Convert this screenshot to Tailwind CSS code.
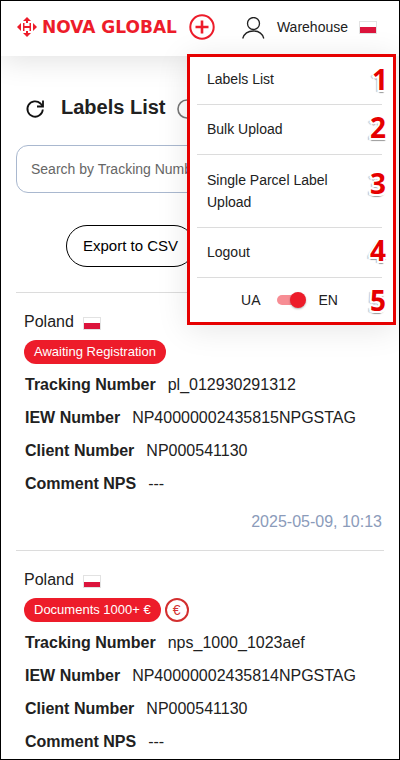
<!DOCTYPE html>
<html lang="en">
<head>
  <meta charset="utf-8">
  <meta name="viewport" content="width=device-width, initial-scale=1">
  <title>Nova Global - Labels List</title>
  <script src="https://cdn.jsdelivr.net/npm/@tailwindcss/browser@4"></script>
</head>
<body class="bg-white font-['Liberation_Sans',Arial,sans-serif] text-base text-[#212121]">
  <div class="relative min-h-screen border border-black overflow-hidden">

    <header class="flex items-center h-[55px] pb-[3px] pl-[15px] pr-[22px] shadow-[0_4px_30px_rgba(0,0,0,0.12)]">
      <a href="#" class="flex items-center gap-1 text-[#ed1c2a]" aria-label="Nova Global">
        <svg class="w-[22px] h-[22px]" viewBox="0 0 22 22" fill="currentColor">
          <path d="M11 1l4 4h-3v2h-2V5H7z"/>
          <path d="M11 21l-4-4h3v-2h2v2h3z"/>
          <path d="M7 7h1.500v3h5V7H15v8h-1.500v-3h-5v3H7z"/>
          <path d="M1 11l4-4v8z"/>
          <path d="M21 11l-4-4v8z"/>
        </svg>
        <span class="font-['DejaVu_Sans',sans-serif] text-[17px] leading-6 font-bold whitespace-nowrap">NOVA GLOBAL</span>
      </a>
      <button type="button" class="ml-3 shrink-0 text-[#ed1c2a]" aria-label="Create label">
        <svg class="w-[26px] h-[26px]" viewBox="0 0 26 26" fill="none" stroke="currentColor" stroke-width="2">
          <circle cx="13" cy="13" r="11.7"/>
          <path stroke-width="2.6" d="M13 6.500v13M6.500 13h13"/>
        </svg>
      </button>
      <button type="button" class="ml-auto flex items-center gap-2.5 text-sm">
        <svg class="w-6 h-6 mt-1 mr-px" viewBox="0 0 24 24" fill="none" stroke="#212121" stroke-width="1.300">
          <circle cx="11.500" cy="6.500" r="6"/>
          <path d="M.7 21.500c1.500-5 6-7.500 10.700-7.500S20.500 16.500 21.800 21.500"/>
        </svg>
        <span>Warehouse</span>
        <span class="ml-px w-[18px] h-[13px] border border-[#e2e2e2] bg-linear-to-b from-white from-50% to-[#dc143c] to-50%"></span>
      </button>
    </header>

    <main class="px-[15px]">
      <div class="flex items-center pt-[39px] pl-[9px]">
        <button type="button" class="mt-1" aria-label="Refresh">
          <svg class="w-5 h-5" viewBox="0 0 20 20" fill="none" stroke="#111" stroke-width="1.800">
            <path d="M17.800 10.500A7.700 7.700 0 1 1 15.500 4.500L17.500 6.800"/>
            <path d="M18 1.500v6h-6"/>
          </svg>
        </button>
        <h1 class="ml-4 text-xl leading-6 font-bold">Labels List</h1>
        <svg class="ml-3 mt-1 w-5 h-5" viewBox="0 0 20 20" fill="none" stroke="#777" stroke-width="1.600">
          <circle cx="10" cy="10" r="9"/>
          <path d="M12 9v5M12 5.500v1.500"/>
        </svg>
      </div>

      <input type="search" aria-label="Search" placeholder="Search by Tracking Number"
        class="block mt-[26px] w-full h-12 px-3.5 text-sm border border-[#a9b8cf] rounded-xl placeholder:text-[#666]">

      <button type="button" class="block ml-[50px] mt-8 h-[42px] px-4 text-[15px] text-black border border-black rounded-full">Export to CSV</button>

      <section class="mt-[25px] border-t border-[#dcdcdc] pl-2 pr-0.5 pt-[17px] pb-4">
        <div class="flex items-center gap-2 leading-6">
          <span>Poland</span>
          <span class="ml-px w-[18px] h-[13px] mt-0.5 border border-[#e2e2e2] bg-linear-to-b from-white from-50% to-[#dc143c] to-50%"></span>
        </div>
        <div class="mt-1.5 mb-1 flex gap-1">
          <span class="h-6 px-[10px] text-[13px] leading-6 text-white bg-[#ed1c2a] rounded-full">Awaiting Registration</span>
        </div>
        <dl class="pl-px leading-[33px]">
          <div class="flex gap-3"><dt class="font-bold">Tracking Number</dt><dd>pl_012930291312</dd></div>
          <div class="flex gap-3"><dt class="font-bold">IEW Number</dt><dd>NP40000002435815NPGSTAG</dd></div>
          <div class="flex gap-3"><dt class="font-bold">Client Number</dt><dd>NP000541130</dd></div>
          <div class="flex gap-3"><dt class="font-bold">Comment NPS</dt><dd>---</dd></div>
        </dl>
        <p class="mt-2.5 text-right leading-6 text-[#8b9bba]">2025-05-09, 10:13</p>
      </section>

      <section class="border-t border-[#dcdcdc] pl-2 pr-0.5 pt-[17px]">
        <div class="flex items-center gap-2 leading-6">
          <span>Poland</span>
          <span class="ml-px w-[18px] h-[13px] mt-0.5 border border-[#e2e2e2] bg-linear-to-b from-white from-50% to-[#dc143c] to-50%"></span>
        </div>
        <div class="mt-1.5 mb-1 flex gap-1">
          <span class="h-6 px-[10px] text-[13px] leading-6 text-white bg-[#ed1c2a] rounded-full">Documents 1000+ €</span>
          <span class="w-6 h-6 text-sm leading-5 text-center text-[#d32f2f] border-2 border-[#d32f2f] rounded-full">€</span>
        </div>
        <dl class="pl-px leading-[33px]">
          <div class="flex gap-3"><dt class="font-bold">Tracking Number</dt><dd>nps_1000_1023aef</dd></div>
          <div class="flex gap-3"><dt class="font-bold">IEW Number</dt><dd>NP40000002435814NPGSTAG</dd></div>
          <div class="flex gap-3"><dt class="font-bold">Client Number</dt><dd>NP000541130</dd></div>
          <div class="flex gap-3"><dt class="font-bold">Comment NPS</dt><dd>---</dd></div>
        </dl>
      </section>
    </main>

    <!-- user menu -->
    <nav class="absolute top-[53px] right-[3px] w-[209px] px-[7px] bg-white border-[3px] border-[#e60000] text-sm leading-[22px] shadow-[0_4px_30px_rgba(0,0,0,0.1)]">
      <ul>
        <li class="relative mr-1 border-b border-[#dcdcdc]">
          <a href="#" class="block px-2.5 pt-[11px] pb-3.5">Labels List</a>
          <span class="absolute top-1.5 -right-1.5 font-['Open_Sans',sans-serif] text-[28px] leading-8 font-bold text-[#e60000] [text-shadow:-2px_0_#fff,2px_0_#fff,0_2px_#fff,0_-2px_#fff,-2px_2px_#fff,2px_2px_#fff,0_3px_1px_#999,-3px_2px_1px_#bbb]">1</span>
        </li>
        <li class="relative mr-1 border-b border-[#dcdcdc]">
          <a href="#" class="block px-2.5 pt-[13px] pb-3.5">Bulk Upload</a>
          <span class="absolute top-1.5 -right-1 font-['Open_Sans',sans-serif] text-[28px] leading-8 font-bold text-[#e60000] [text-shadow:-2px_0_#fff,2px_0_#fff,0_2px_#fff,0_-2px_#fff,-2px_2px_#fff,2px_2px_#fff,0_3px_1px_#999,-3px_2px_1px_#bbb]">2</span>
        </li>
        <li class="relative mr-1 border-b border-[#dcdcdc]">
          <a href="#" class="block px-2.5 pt-3.5 pb-3.5">Single Parcel Label Upload</a>
          <span class="absolute top-3 -right-1 font-['Open_Sans',sans-serif] text-[28px] leading-8 font-bold text-[#e60000] [text-shadow:-2px_0_#fff,2px_0_#fff,0_2px_#fff,0_-2px_#fff,-2px_2px_#fff,2px_2px_#fff,0_3px_1px_#999,-3px_2px_1px_#bbb]">3</span>
        </li>
        <li class="relative mr-1 border-b border-[#dcdcdc]">
          <a href="#" class="block px-2.5 pt-[13px] pb-3.5">Logout</a>
          <span class="absolute top-1.5 -right-1 font-['Open_Sans',sans-serif] text-[28px] leading-8 font-bold text-[#e60000] [text-shadow:-2px_0_#fff,2px_0_#fff,0_2px_#fff,0_-2px_#fff,-2px_2px_#fff,2px_2px_#fff,0_3px_1px_#999,-3px_2px_1px_#bbb]">4</span>
        </li>
        <li class="relative mr-1 flex justify-center h-11 items-center">
          <label for="lang">UA</label>
          <span class="relative mx-4 w-[26px] h-2.5 rounded-full bg-[#f78d94]">
            <span class="absolute -top-[3px] right-[-3px] w-4 h-4 rounded-full bg-[#ed1c2a] shadow-[0_1px_2px_rgba(0,0,0,0.3)]"></span>
            <input id="lang" type="checkbox" role="switch" checked class="absolute inset-0 opacity-0">
          </span>
          <label for="lang">EN</label>
          <span class="absolute top-1.5 -right-1 font-['Open_Sans',sans-serif] text-[28px] leading-8 font-bold text-[#e60000] [text-shadow:-2px_0_#fff,2px_0_#fff,0_2px_#fff,0_-2px_#fff,-2px_2px_#fff,2px_2px_#fff,0_3px_1px_#999,-3px_2px_1px_#bbb]">5</span>
        </li>
      </ul>
    </nav>
  </div>
</body>
</html>
